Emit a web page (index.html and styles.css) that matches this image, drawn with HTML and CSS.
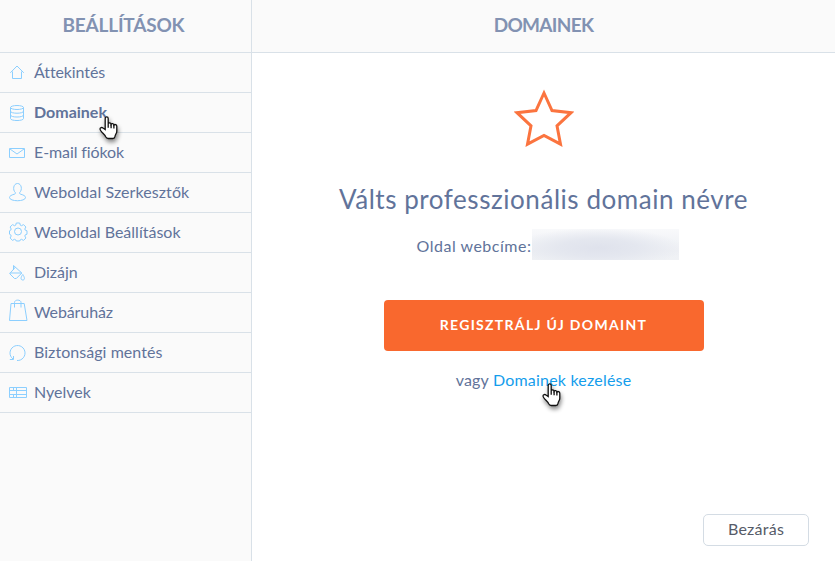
FILE: index.html
```html
<!DOCTYPE html>
<html lang="hu">
  <head>
    <meta charset="UTF-8" />
    <meta name="viewport" content="width=device-width, initial-scale=1" />
    <title>Domainek</title>
    <link rel="stylesheet" href="styles.css">
  </head>
  <body>
    <svg class="defs" width="0" height="0">
      <symbol id="hand" viewBox="0 0 20 24">
        <path d="M6.2 13.5V2.6c0-2.2 3-2.2 3 0v5.2c.3-1.3 2.7-1.2 2.9.4.5-1 2.6-.8 2.8.8.7-.9 2.9-.5 2.9 1.3v4.9c0 2.2-1.6 3.2-1.8 5.3-.2 1.5-1 2-2.2 2H9.2c-1.2 0-1.9-.5-2.5-1.7-.9-2-2.8-3.4-4.3-5.2-.8-1-1.4-1.8-1.4-2.7 0-1.5 1.9-1.8 3-.8z" />
        <path d="M9.2 7.8v4M12.1 8.2v4M14.9 9v3.5" />
      </symbol>
    </svg>
    <div class="settings">
      <aside class="sidebar">
        <h2 class="title">BEÁLLÍTÁSOK</h2>
        <ul class="menu">
          <li class="item">
            <svg class="icon" viewBox="0 0 26 39"><path d="M2.300 19.800 9 13l6.800 6.800M4.500 18.500v7h9v-7" /></svg>
            <span class="overview">Áttekintés</span>
          </li>
          <li class="item active">
            <svg class="icon" viewBox="0 0 26 39"><ellipse cx="9" cy="14.500" rx="6.500" ry="2" /><path d="M2.500 14.500v11c0 2.700 13 2.700 13 0v-11M2.500 18.200c0 2.700 13 2.700 13 0M2.500 22c0 2.700 13 2.700 13 0" /></svg>
            <span class="domains">Domainek</span>
            <svg class="cursor"><use href="#hand" /></svg>
          </li>
          <li class="item">
            <svg class="icon" viewBox="0 0 26 39"><path d="M1.500 15.500h15v9h-15zM2 16l7 5 7-5" /></svg>
            <span class="email">E-mail fiókok</span>
          </li>
          <li class="item">
            <svg class="icon" viewBox="0 0 26 39"><path d="M7.300 19.500C4.500 17 5.300 10.500 9.500 10.500s5 6.500 2.200 9c-.5 1 .2 1.500 1.300 1.800 2.500.7 4.500 1.700 4.500 3.200 0 4.300-16 4.300-16 0 0-1.500 2-2.500 4.500-3.200 1.100-.3 1.800-.8 1.300-1.800z" /></svg>
            <span class="editors">Weboldal Szerkesztők</span>
          </li>
          <li class="item">
            <svg class="icon" viewBox="0 0 26 39"><circle cx="10" cy="18.500" r="3.500" /><path d="M8.300 10h3.400l.6 2.200 1.200.5 2-1.100 2.400 2.400-1.100 2 .5 1.200 1.700.6v3.400l-1.700.6-.5 1.200 1.100 2-2.400 2.400-2-1.100-1.200.5-.6 1.200H8.300l-.6-1.200-1.200-.5-2 1.100-2.400-2.400 1.100-2-.5-1.200-1.200-.6v-3.400l1.200-.6.5-1.200-1.100-2 2.400-2.400 2 1.100 1.200-.5z" /></svg>
            <span class="config">Weboldal Beállítások</span>
          </li>
          <li class="item">
            <svg class="icon" viewBox="0 0 26 39"><path d="M5.500 12.500 13.800 20l-5.500 5.500H6.500l-4.800-4.800L7.500 14M5.500 12.500V17M1.800 20h12M14.800 21.500c-2.300 3-2.300 5.500 0 5.500s2-2.500 0-5.500z" /></svg>
            <span class="design">Dizájn</span>
          </li>
          <li class="item">
            <svg class="icon" viewBox="0 0 26 39"><path d="M3 10.500h13.200l2.800 17H1.500zM6.500 14.500V9.500c0-3.200 6.500-3.200 6.500 0v5" /></svg>
            <span class="shop">Webáruház</span>
          </li>
          <li class="item">
            <svg class="icon" viewBox="0 0 26 39"><path d="M9 27.500A7.500 7.500 0 1 0 5 26M1.800 26.500h3.700v-3.500" /></svg>
            <span class="backup">Biztonsági mentés</span>
          </li>
          <li class="item">
            <svg class="icon" viewBox="0 0 26 39"><path d="M1.500 14.500h17v10h-17zM8.500 14.500v10M1.500 17.500h17M1.500 21.500h17M5.500 14.500v3M5.500 21.500v3" /></svg>
            <span class="languages">Nyelvek</span>
          </li>
        </ul>
      </aside>

      <main class="content">
        <h2 class="title domain-title">DOMAINEK</h2>
        <div class="panel">
          <svg class="star" viewBox="0 0 60 58"><path d="M30 4l8 17.500 19 2.200-14 13.200 3.500 18.300L30 46.500l-16.500 8.700L17 36.900 3 23.700l19-2.200z" /></svg>
          <h1 class="heading">Válts professzionális domain névre</h1>
          <p class="address"><span>Oldal webcíme:</span><span class="hidden-url"></span></p>
          <button class="register">REGISZTRÁLJ ÚJ DOMAINT</button>
          <p class="manage">
            <span class="or">vagy</span>
            <a class="link">Domainek kezelése</a>
            <svg class="cursor"><use href="#hand" /></svg>
          </p>
        </div>
        <div class="footer">
          <button class="close">Bezárás</button>
        </div>
      </main>
    </div>
  </body>
</html>
```

FILE: styles.css
```css
* {
  box-sizing: border-box;
}
body {
  margin: 0;
  font-family: Lato, "Open Sans", sans-serif;
  font-size: 16px;
  color: #61739a;
}
h1,
h2,
p,
ul {
  margin: 0;
  padding: 0;
}
button {
  font-family: inherit;
  padding: 0;
}
.defs {
  position: absolute;
}
.settings {
  display: flex;
  height: 561px;
  overflow: hidden;
}
.sidebar {
  width: 252px;
  background: #fafafa;
  border-right: 1px solid #d9e1e8;
}
.title {
  height: 53px;
  padding-right: 4px;
  line-height: 50px;
  text-align: center;
  font-size: 19px;
  font-weight: 700;
  letter-spacing: -0.2px;
  color: #8292b2;
  background: #fafafa;
  border-bottom: 1px solid #d9e1e8;
}
.domain-title {
  padding-right: 0;
  letter-spacing: -0.7px;
}
.menu {
  list-style: none;
}
.item {
  display: flex;
  position: relative;
  height: 40px;
  padding-left: 8px;
  line-height: 37px;
  border-bottom: 1px solid #d9e1e8;
  white-space: nowrap;
}
.active {
  font-weight: 700;
}
.overview,
.email,
.shop {
  letter-spacing: -0.1px;
}
.editors {
  letter-spacing: 0.08px;
}
.backup {
  letter-spacing: 0.05px;
}
.icon {
  width: 26px;
  height: 39px;
  flex: none;
  fill: none;
  stroke: #8ccfff;
  stroke-width: 1;
}
.cursor {
  position: absolute;
  z-index: 2;
  left: 99px;
  top: 23px;
  width: 20px;
  height: 24px;
  overflow: visible;
  fill: #fff;
  stroke: #111;
  stroke-width: 1.3;
  filter: drop-shadow(1px 3px 2px rgba(0, 0, 0, 0.45));
}
.content {
  display: flex;
  flex: 1;
  flex-direction: column;
}
.panel {
  display: flex;
  flex: 1;
  flex-direction: column;
  align-items: center;
}
.star {
  width: 60px;
  height: 58px;
  margin-top: 36px;
  fill: none;
  stroke: #fb743f;
  stroke-width: 3;
}
.heading {
  margin-top: 34px;
  line-height: 36px;
  font-size: 26px;
  font-weight: 400;
  letter-spacing: 0.55px;
  white-space: nowrap;
}
.address {
  display: flex;
  margin: 12px 0 0 9px;
  height: 31px;
  line-height: 33px;
  letter-spacing: 0.5px;
}
.hidden-url {
  width: 147px;
  margin-left: 1px;
  background: radial-gradient(ellipse 85px 20px at 66px 19px, #dfe2ec 0%, #e4e7ef 45%, rgba(236, 238, 243, 0) 100%), linear-gradient(#f8f9fb, #eef0f4 70%, #f0f2f5);
}
.register {
  width: 320px;
  height: 51px;
  margin-top: 40px;
  padding-bottom: 2px;
  border: 0;
  border-radius: 4px;
  background: #f9682e;
  color: #fff;
  font-size: 14px;
  font-weight: 700;
  letter-spacing: 1.3px;
}
.manage {
  position: relative;
  margin-top: 15px;
  line-height: 28px;
  letter-spacing: 0.2px;
}
.link {
  color: #149dec;
}
.manage .cursor {
  left: 86px;
  top: 17px;
}
.footer {
  display: flex;
  justify-content: flex-end;
  padding: 0 26px 15px 0;
}
.close {
  width: 106px;
  height: 32px;
  padding-bottom: 3px;
  border: 1px solid #d4dce4;
  border-radius: 5px;
  background: #fff;
  color: #565b68;
  font-size: 16px;
  letter-spacing: 0.25px;
}
```
